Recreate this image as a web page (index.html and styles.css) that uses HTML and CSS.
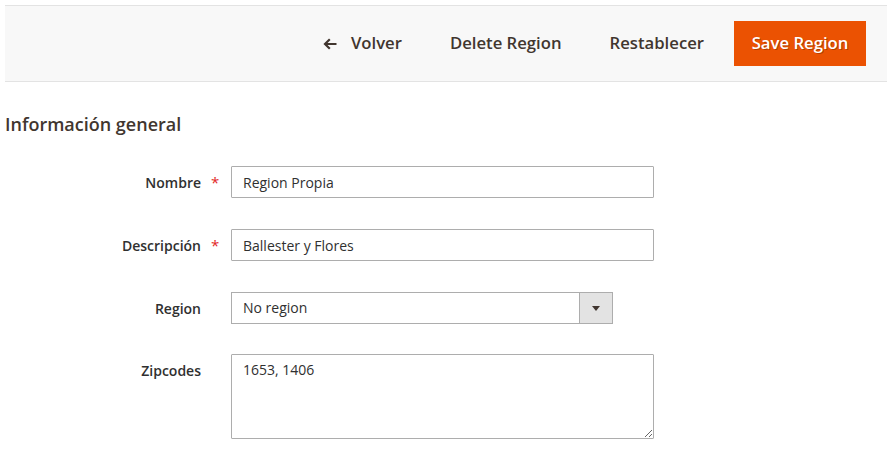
FILE: index.html
```html
<!DOCTYPE html>
<html lang="es">
<head>
<meta charset="utf-8">
<title>Region</title>
<link rel="stylesheet" href="styles.css">
</head>
<body>
<div class="page">
  <div class="actions-bar">
    <div class="actions">
      <button class="action-back" type="button">
        <svg class="arrow" width="14" height="12" viewBox="0 0 14 12" aria-hidden="true">
          <path d="M13.5 6H2.5M6.8 1.3L2 6l4.8 4.7" fill="none" stroke="#41362f" stroke-width="2.2"/>
        </svg>
        <span>Volver</span>
      </button>
      <button class="action-tertiary" type="button">Delete Region</button>
      <button class="action-tertiary" type="button">Restablecer</button>
      <button class="action-primary" type="button">Save Region</button>
    </div>
  </div>

  <div class="fieldset">
    <h2 class="legend">Información general</h2>

    <div class="field">
      <label class="label">Nombre</label>
      <span class="req">*</span>
      <div class="control"><input class="input wide" type="text" value="Region Propia"></div>
    </div>

    <div class="field">
      <label class="label">Descripción</label>
      <span class="req">*</span>
      <div class="control"><input class="input wide" type="text" value="Ballester y Flores"></div>
    </div>

    <div class="field field-select">
      <label class="label">Region</label>
      <span class="req"></span>
      <div class="control">
        <div class="select">
          <span class="select-value">No region</span>
          <span class="select-arrow"><span class="tri"></span></span>
        </div>
      </div>
    </div>

    <div class="field">
      <label class="label">Zipcodes</label>
      <span class="req"></span>
      <div class="control"><textarea class="textarea">1653, 1406</textarea></div>
    </div>
  </div>
</div>
</body>
</html>
```

FILE: styles.css
```css
* { box-sizing: border-box; }

html, body {
  margin: 0;
  padding: 0;
  background: #ffffff;
}

body {
  font-family: "Open Sans", "Liberation Sans", sans-serif;
  color: #303030;
  font-size: 14px;
}

.page {
  padding: 5px 0 0 5px;
}

.actions-bar {
  background: #f8f8f8;
  border-top: 1px solid #e3e3e3;
  border-bottom: 1px solid #e3e3e3;
  height: 77px;
  display: flex;
  align-items: center;
  justify-content: flex-end;
  padding-right: 21px;
}

.actions {
  display: flex;
  align-items: center;
}

.actions button {
  font-family: "Open Sans", "Liberation Sans", sans-serif;
  font-size: 16.7px;
  font-weight: 600;
  border: 0;
  background: transparent;
  color: #41362f;
  height: 45px;
  cursor: pointer;
  line-height: 1;
  padding-top: 0;
  padding-bottom: 0;
}

.action-back {
  display: flex;
  align-items: center;
  gap: 14px;
  padding: 0 24px 0 0;
}

.action-back .arrow { display: block; margin-top: 0; }

.action-tertiary {
  padding: 0 24px;
}

.action-primary.action-primary {
  background: #eb5202;
  color: #ffffff;
  padding: 0;
  width: 132px;
  margin-left: 6px;
  text-shadow: 1px 1px 0 rgba(0,0,0,0.25);
}

.fieldset {
  padding-top: 30px;
}

.legend {
  margin: 0 0 30px 0;
  font-size: 18px;
  font-weight: 600;
  color: #41362f;
  line-height: 24px;
}

.field {
  display: grid;
  grid-template-columns: 196px 30px 423px;
  align-items: start;
  margin-bottom: 31px;
}

.field-select {
  margin-bottom: 30px;
}

.label {
  text-align: right;
  font-weight: 600;
  font-size: 14px;
  color: #303030;
  line-height: 31px;
  padding-top: 1px;
}

.req {
  color: #e22626;
  font-size: 15px;
  line-height: 31px;
  padding-left: 10px;
  padding-top: 1px;
}

.input {
  display: block;
  height: 32px;
  width: 100%;
  border: 1px solid #adadad;
  border-radius: 1px;
  padding: 0 11px;
  font-family: "Open Sans", "Liberation Sans", sans-serif;
  font-size: 14px;
  color: #303030;
  background: #fff;
  outline: none;
}

.select {
  display: flex;
  width: 382px;
  height: 32px;
  border: 1px solid #adadad;
  background: #fff;
}

.select-value {
  flex: 1;
  padding: 0 11px;
  line-height: 30px;
  font-size: 14px;
  color: #303030;
}

.select-arrow {
  width: 33px;
  background: #e3e3e3;
  border-left: 1px solid #adadad;
  display: flex;
  align-items: center;
  justify-content: center;
}

.tri {
  width: 0;
  height: 0;
  border-left: 4px solid transparent;
  border-right: 4px solid transparent;
  border-top: 5px solid #41362f;
  margin-top: 1px;
}

.textarea {
  display: block;
  width: 100%;
  height: 85px;
  border: 1px solid #adadad;
  border-radius: 1px;
  padding: 5px 11px;
  font-family: "Open Sans", "Liberation Sans", sans-serif;
  font-size: 14px;
  line-height: 20px;
  color: #303030;
  resize: vertical;
  outline: none;
}
```
